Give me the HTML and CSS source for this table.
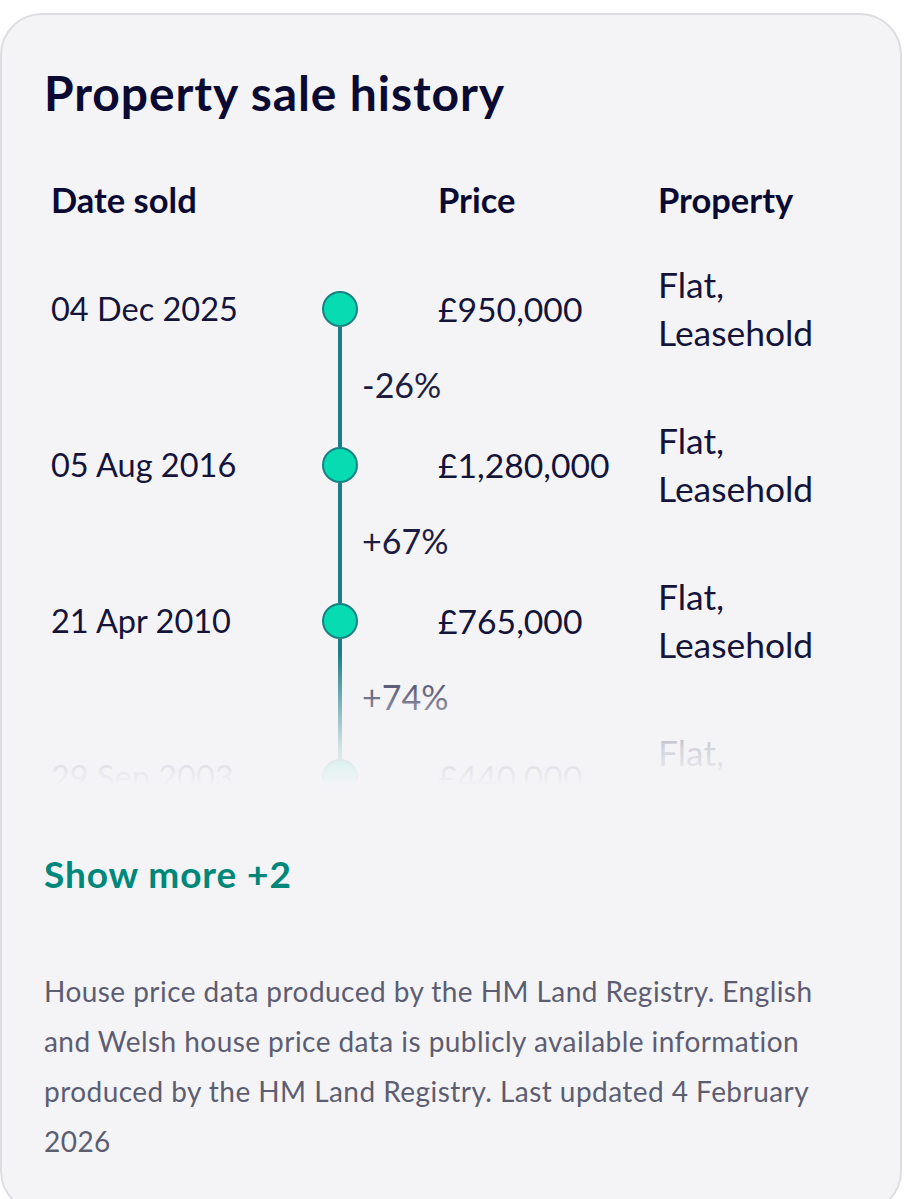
FILE: index.html
```html
<!DOCTYPE html>
<html lang="en">
<head>
<meta charset="utf-8">
<title>Property sale history</title>
<link rel="stylesheet" href="styles.css">
</head>
<body>
<section class="card">
  <h2 class="title">Property sale history</h2>

  <div class="history">
    <div class="grid head">
      <div class="c-date">Date sold</div>
      <div class="c-price">Price</div>
      <div class="c-prop">Property</div>
    </div>

    <div class="grid item">
      <div class="c-date">04 Dec 2025</div>
      <div class="c-line"><span class="seg none"></span><span class="dot"></span><span class="seg"></span></div>
      <div class="c-price">£950,000</div>
      <div class="c-prop">Flat,<br>Leasehold</div>
    </div>
    <div class="grid change">
      <div class="c-line"><span class="seg"></span></div>
      <div class="c-pct">-26%</div>
    </div>

    <div class="grid item">
      <div class="c-date">05 Aug 2016</div>
      <div class="c-line"><span class="seg"></span><span class="dot"></span><span class="seg"></span></div>
      <div class="c-price">£1,280,000</div>
      <div class="c-prop">Flat,<br>Leasehold</div>
    </div>
    <div class="grid change">
      <div class="c-line"><span class="seg"></span></div>
      <div class="c-pct">+67%</div>
    </div>

    <div class="grid item">
      <div class="c-date">21 Apr 2010</div>
      <div class="c-line"><span class="seg"></span><span class="dot"></span><span class="seg"></span></div>
      <div class="c-price">£765,000</div>
      <div class="c-prop">Flat,<br>Leasehold</div>
    </div>
    <div class="grid change">
      <div class="c-line"><span class="seg"></span></div>
      <div class="c-pct">+74%</div>
    </div>

    <div class="grid item">
      <div class="c-date">29 Sep 2003</div>
      <div class="c-line"><span class="seg"></span><span class="dot"></span><span class="seg"></span></div>
      <div class="c-price">£440,000</div>
      <div class="c-prop">Flat,<br>Leasehold</div>
    </div>

    <div class="fade"></div>
  </div>

  <button class="more" type="button">Show more +2</button>

  <p class="note">House price data produced by the HM Land Registry. English and Welsh house price data is publicly available information produced by the HM Land Registry. Last updated 4 February 2026</p>
</section>
</body>
</html>
```

FILE: styles.css
```css
* { box-sizing: border-box; }

html, body {
  margin: 0;
  padding: 0;
  background: #ffffff;
}

body {
  font-family: "Lato", "Noto Sans", sans-serif;
  color: #14143b;
}

.card {
  width: 902px;
  margin-top: 13px;
  background: #f4f4f7;
  border: 2px solid #dedee2;
  border-radius: 42px;
  padding: 52px 42px 40px 42px;
  min-height: 1200px;
}

.title {
  margin: 0;
  font-size: 48px;
  line-height: 52px;
  font-weight: 700;
  letter-spacing: 0.9px;
  color: #0b0a33;
}

.history {
  position: relative;
  margin-top: 61px;
  height: 644px;
  overflow: hidden;
}

.grid {
  display: grid;
  grid-template-columns: 271px 36px 80px 220px 1fr;
  padding-left: 7px;
}

.head {
  font-size: 34.5px;
  line-height: 40px;
  font-weight: 700;
  color: #0b0a33;
  margin-bottom: 41px;
}

.head .c-date { grid-column: 1; }
.head .c-price { grid-column: 4; }
.head .c-prop { grid-column: 5; }

.item {
  height: 96px;
  line-height: 48px;
  align-items: center;
}

.item .c-date { grid-column: 1; font-size: 32.5px; }
.item .c-line { grid-column: 2; }
.item .c-price { grid-column: 4; font-size: 33.7px; }
.item .c-prop { grid-column: 5; font-size: 35.4px; }

.c-line {
  display: flex;
  flex-direction: column;
  align-items: center;
  height: 100%;
}

.seg {
  flex: 1;
  width: 4px;
  background: #1b7e86;
}

.seg.none { background: transparent; }

.dot {
  flex: none;
  width: 36px;
  height: 36px;
  border-radius: 50%;
  background: #06dbb2;
  border: 2.5px solid #198083;
}

.change {
  height: 60px;
  align-items: center;
}

.change .c-line { grid-column: 2; }

.c-pct {
  grid-column: 3 / 5;
  padding-left: 4px;
  padding-bottom: 4px;
  font-size: 34px;
  line-height: 40px;
  color: #1d1d42;
}

.fade {
  position: absolute;
  left: 0;
  right: 0;
  bottom: 0;
  height: 170px;
  background: linear-gradient(to bottom, rgba(244, 244, 247, 0) 0%, rgba(244, 244, 247, 0.85) 55%, #f4f4f7 78%);
}

.more {
  display: block;
  margin: 28px 0 0 0;
  padding: 0;
  border: 0;
  background: none;
  font-family: inherit;
  font-size: 37px;
  line-height: 44px;
  font-weight: 700;
  letter-spacing: 0.9px;
  color: #00877b;
  cursor: pointer;
}

.note {
  margin: 70px 0 0 0;
  font-size: 28px;
  line-height: 50px;
  letter-spacing: 0.45px;
  color: #5d5d72;
}
```
